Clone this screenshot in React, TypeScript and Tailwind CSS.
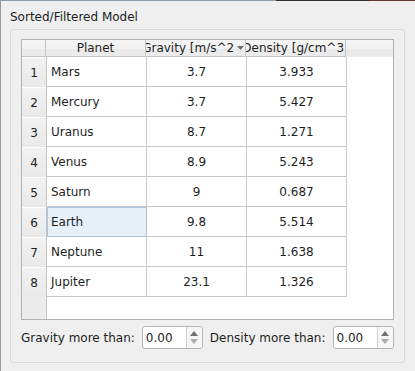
const planets = [
  { name: "Mars", gravity: "3.7", density: "3.933" },
  { name: "Mercury", gravity: "3.7", density: "5.427" },
  { name: "Uranus", gravity: "8.7", density: "1.271" },
  { name: "Venus", gravity: "8.9", density: "5.243" },
  { name: "Saturn", gravity: "9", density: "0.687" },
  { name: "Earth", gravity: "9.8", density: "5.514" },
  { name: "Neptune", gravity: "11", density: "1.638" },
  { name: "Jupiter", gravity: "23.1", density: "1.326" },
];

function SpinBox() {
  return (
    <div className="flex h-[23px] w-[61px] rounded-[3px] border border-[#b4b4b4] bg-white">
      <div className="flex flex-1 items-center pl-[3px]">0.00</div>
      <div className="flex w-[16px] flex-col items-center justify-center gap-[3px] rounded-r-[3px] border-l border-[#d0d0d0] bg-[#f6f6f6]">
        <svg width="8" height="5" viewBox="0 0 8 5">
          <path d="M0 5 L4 0 L8 5 Z" fill="#707070" />
        </svg>
        <svg width="8" height="5" viewBox="0 0 8 5">
          <path d="M0 0 L4 5 L8 0 Z" fill="#ababab" />
        </svg>
      </div>
    </div>
  );
}

export default function App() {
  return (
    <div className="flex h-[371px] w-[415px] flex-col bg-[#efefef] text-[12px] text-[#1e1e1e] [font-family:'DejaVu_Sans',sans-serif]">
      <div className="flex h-px">
        <div className="w-[276px] bg-[#8f9aa8]" />
        <div className="w-[93px] bg-[#2e2e2e]" />
        <div className="flex-1 bg-[#6a3434]" />
      </div>
      <div className="flex flex-1 border-l border-[#9a9a9a]">
        <div className="flex flex-1 flex-col pl-[9px] pr-[10px] pt-[9px] pb-[8px]">
          <div className="h-[15px] leading-[15px]">Sorted/Filtered Model</div>
          <div className="mt-[4px] flex flex-1 flex-col rounded-[3px] border border-[#d9d9d9] px-[10px] pt-[9px]">
            <div className="flex h-[281px] flex-col border border-[#b2b2b2] bg-white">
              <div className="flex h-[17px] bg-[linear-gradient(#f5f5f5_0%,#f1f1f1_50%,#eaeaea_50%,#ececec_100%)] leading-[16px]">
                <div className="w-[24px] border-r border-b border-[#c4c4c4]" />
                <div className="flex w-[100px] justify-center overflow-hidden whitespace-nowrap border-r border-b border-[#c4c4c4]">
                  Planet
                </div>
                <div className="flex w-[100px] border-r border-b border-[#c4c4c4]">
                  <div className="flex flex-1 justify-center overflow-hidden whitespace-nowrap">
                    Gravity [m/s^2]
                  </div>
                  <div className="flex w-[10px] items-center justify-center">
                    <svg width="7" height="4" viewBox="0 0 7 4">
                      <path d="M0 0 L3.5 4 L7 0 Z" fill="#6a6a6a" />
                    </svg>
                  </div>
                </div>
                <div className="flex w-[100px] justify-center overflow-hidden whitespace-nowrap border-r border-b border-[#c4c4c4]">
                  Density [g/cm^3]
                </div>
                <div className="flex-1" />
              </div>
              <div className="flex flex-1">
                <div className="flex w-[24px] flex-col bg-[#ececec]">
                  {planets.map((p, i) => (
                    <div
                      key={p.name}
                      className="flex h-[30px] items-center justify-center border-t border-white bg-[linear-gradient(#f2f2f2,#e9e9e9)]"
                    >
                      {i + 1}
                    </div>
                  ))}
                </div>
                <div className="flex flex-1 flex-col border-l border-[#c4c4c4]">
                  {planets.map((p) => {
                    const selected = p.name === "Earth";
                    return (
                      <div key={p.name} className="flex h-[30px]">
                        <div
                          className={
                            selected
                              ? "flex w-[100px] items-center border border-[#aac4db] bg-[#e6f0f9] pl-[3px]"
                              : "flex w-[100px] items-center border-r border-b border-[#c8c8c8] pl-[4px]"
                          }
                        >
                          {p.name}
                        </div>
                        <div className="flex w-[100px] items-center justify-center border-r border-b border-[#c8c8c8]">
                          {p.gravity}
                        </div>
                        <div className="flex w-[100px] items-center justify-center border-r border-b border-[#c8c8c8]">
                          {p.density}
                        </div>
                      </div>
                    );
                  })}
                </div>
              </div>
            </div>
            <div className="mt-[6px] flex items-center">
              <span>Gravity more than:</span>
              <div className="ml-[7px]">
                <SpinBox />
              </div>
              <span className="ml-[7px]">Density more than:</span>
              <div className="ml-[7px]">
                <SpinBox />
              </div>
            </div>
          </div>
        </div>
      </div>
    </div>
  );
}
